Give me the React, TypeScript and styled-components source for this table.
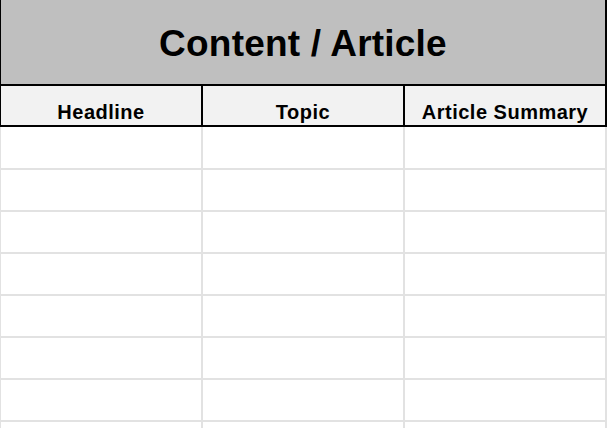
import React from 'react'
import styled, { createGlobalStyle } from 'styled-components'

const GlobalStyle = createGlobalStyle`
  html, body {
    margin: 0;
    padding: 0;
    background: #ffffff;
    overflow: hidden;
  }
  body {
    font-family: 'Liberation Sans', Arial, sans-serif;
  }
`

const columns = ['Headline', 'Topic', 'Article Summary']
const ROW_COUNT = 8

const Sheet = styled.div`
  width: 608px;
  margin-left: -1px;
  display: flex;
  flex-direction: column;
`

const TitleBar = styled.div`
  height: 84px;
  padding-top: 3px;
  box-sizing: border-box;
  background: #bfbfbf;
  border-left: 2px solid #000;
  border-right: 2px solid #000;
  display: flex;
  align-items: center;
  justify-content: center;
  font-size: 37px;
  font-weight: 700;
  letter-spacing: 0.2px;
  color: #000;
`

const HeaderRow = styled.div`
  display: grid;
  grid-template-columns: repeat(3, 200px);
  gap: 2px;
  padding: 2px;
  background: #000;
`

const HeaderCell = styled.div`
  height: 39px;
  background: #f2f2f2;
  display: flex;
  align-items: flex-end;
  justify-content: center;
  padding-bottom: 1px;
  box-sizing: border-box;
  font-size: 20px;
  letter-spacing: 0.5px;
  font-weight: 700;
  color: #000;
`

// first data row is one pixel taller than the rest
const Body = styled.div`
  display: grid;
  grid-template-columns: repeat(3, 200px);
  grid-template-rows: 41px;
  grid-auto-rows: 40px;
  gap: 2px;
  padding: 0 2px 2px;
  background: #e2e2e2;
`

const Cell = styled.div`
  background: #ffffff;
`

export default function App() {
  return (
    <>
      <GlobalStyle />
      <Sheet>
        <TitleBar>Content / Article</TitleBar>
        <HeaderRow>
          {columns.map(c => (
            <HeaderCell key={c}>{c}</HeaderCell>
          ))}
        </HeaderRow>
        <Body>
          {Array.from({ length: ROW_COUNT * 3 }).map((_, i) => (
            <Cell key={i} />
          ))}
        </Body>
      </Sheet>
    </>
  )
}
